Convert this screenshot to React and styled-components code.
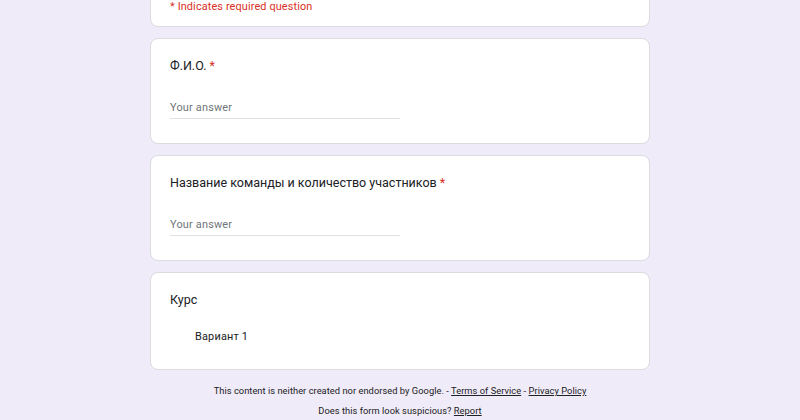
import React from 'react';
import styled, { createGlobalStyle } from 'styled-components';

const GlobalStyle = createGlobalStyle`
  html, body {
    margin: 0;
    padding: 0;
    background: #f0ebf8;
    font-family: Roboto, 'Liberation Sans', Arial, sans-serif;
    overflow: hidden;
  }
`;

const Page = styled.div`
  width: 500px;
  margin: -13px auto 0;
  display: flex;
  flex-direction: column;
  gap: 11px;
`;

const Card = styled.div`
  background: #fff;
  border: 1px solid #dadce0;
  border-radius: 8px;
  padding: ${(p) => p.$pad || '18px 19px 24px'};
  box-sizing: border-box;
  height: ${(p) => p.$h || 'auto'};
`;

const Required = styled.div`
  color: #d93025;
  font-size: 10.9px;
  line-height: 14px;
  letter-spacing: 0.12px;
`;

const Title = styled.div`
  color: #202124;
  font-size: 12.5px;
  line-height: 18px;
`;

const Star = styled.span`
  color: #d93025;
  margin-left: 3px;
`;

const AnswerField = styled.div`
  width: 230px;
  margin-top: 25px;
  padding-bottom: 2px;
  border-bottom: 1px solid #e0e0e0;
  color: #70757a;
  font-size: 10.9px;
  line-height: 16px;
  letter-spacing: 0.2px;
`;

const Option = styled.div`
  margin: 20px 0 0 25px;
  color: #202124;
  font-size: 10.9px;
  line-height: 16px;
  letter-spacing: 0.2px;
`;

const Footer = styled.div`
  display: flex;
  flex-direction: column;
  align-items: center;
  gap: 6px;
  margin-top: 3px;
  color: #202124;
  font-size: 9.3px;
  line-height: 14px;
  letter-spacing: 0.04px;
`;

const Link = styled.a`
  color: #202124;
  text-decoration: underline;
`;

const Question = ({ title, required }) => (
  <Card $h="106px">
    <Title>
      {title}
      {required && <Star>*</Star>}
    </Title>
    <AnswerField>Your answer</AnswerField>
  </Card>
);

export default function App() {
  return (
    <>
      <GlobalStyle />
      <Page>
        <Card $pad="12px 19px 12px">
          <Required>* Indicates required question</Required>
        </Card>
        <Question title="Ф.И.О." required />
        <Question title="Название команды и количество участников" required />
        <Card $pad="18px 19px 24px" $h="98px">
          <Title>Курс</Title>
          <Option>Вариант 1</Option>
        </Card>
        <Footer>
          <div>
            This content is neither created nor endorsed by Google. - <Link>Terms of Service</Link> -{' '}
            <Link>Privacy Policy</Link>
          </div>
          <div>
            Does this form look suspicious? <Link>Report</Link>
          </div>
        </Footer>
      </Page>
    </>
  );
}
